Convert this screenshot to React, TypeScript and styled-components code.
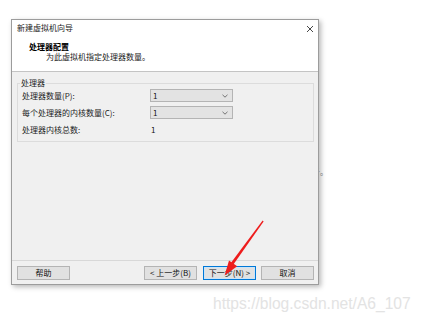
import React from "react";
import styled, { createGlobalStyle } from "styled-components";

const Global = createGlobalStyle`
  html, body { margin: 0; padding: 0; background: #ffffff; }
  body { font-family: "Noto Sans CJK SC", "Noto Sans", sans-serif; }
  * { box-sizing: border-box; }
`;

const Page = styled.div`
  position: relative;
  width: 423px;
  height: 324px;
  overflow: hidden;
  background: #ffffff;
  padding: 19px 0 0 11px;
`;

const Fragment = styled.span`
  position: absolute;
  left: 312px;
  top: 167px;
  font-size: 8px;
  line-height: 10px;
  color: #8a8a8a;
`;

const Dialog = styled.div`
  position: relative;
  z-index: 1;
  width: 308px;
  height: 266px;
  border: 1px solid #9c9c9c;
  background: #f0f0f0;
  box-shadow: 2px 2px 5px rgba(0, 0, 0, 0.28);
  display: flex;
  flex-direction: column;
  font-size: 8px;
  color: #1a1a1a;
`;

const Header = styled.div`
  background: #ffffff;
  border-bottom: 1px solid #c4c4c4;
  padding-bottom: 9px;
`;

const TitleBar = styled.div`
  height: 16px;
  display: flex;
  align-items: center;
  justify-content: space-between;
  padding: 0 4px 0 5px;
  line-height: 10px;
  color: #222;
`;

const Close = styled.svg`
  width: 8px;
  height: 8px;
  margin-top: 1px;
`;

const HeadTitle = styled.div`
  margin-top: 6px;
  padding-left: 17px;
  font-weight: 700;
  line-height: 10px;
  color: #000;
`;

const HeadSub = styled.div`
  padding-left: 34px;
  line-height: 10px;
  color: #222;
`;

const Body = styled.div`
  flex: 1;
  padding: 6px 4px 0 5px;
`;

const Group = styled.fieldset`
  margin: 0;
  padding: 0 4px 5px 4px;
  border: 1px solid #dcdcdc;
  min-width: 0;
`;

const Legend = styled.legend`
  padding: 0 1px;
  margin-left: -2px;
  line-height: 10px;
  color: #222;
`;

const Grid = styled.div`
  display: grid;
  grid-template-columns: 128px 83px;
  grid-auto-rows: 13px;
  row-gap: 4px;
  margin-top: 1px;
  align-items: center;
`;

const Label = styled.div`
  line-height: 10px;
  color: #222;
`;

const Select = styled.div`
  height: 13px;
  border: 1px solid #b4b4b4;
  background: #e3e3e3;
  display: flex;
  align-items: center;
  justify-content: space-between;
  padding: 0 4px 0 2px;
  line-height: 10px;
  color: #111;
`;

const Value = styled.div`
  line-height: 10px;
  padding-left: 1px;
  color: #111;
`;

const Footer = styled.div`
  border-top: 1px solid #d8d8d8;
  padding: 5px 4px 0 5px;
  height: 24px;
  display: flex;
  align-items: flex-start;
`;

const Button = styled.div<{ $primary?: boolean; $gap?: number }>`
  width: 53px;
  height: 14px;
  margin-left: ${(p) => p.$gap ?? 0}px;
  border: 1px solid ${(p) => (p.$primary ? "#0078d7" : "#b4b4b4")};
  box-shadow: ${(p) => (p.$primary ? "inset 0 0 0 1px #cce4f7" : "none")};
  background: #e1e1e1;
  display: flex;
  align-items: center;
  justify-content: center;
  line-height: 10px;
  color: #111;
`;

const Spacer = styled.div`
  flex: 1;
`;

const Arrow = styled.svg`
  position: absolute;
  left: 0;
  top: 0;
  z-index: 2;
  pointer-events: none;
`;

const Watermark = styled.div`
  position: absolute;
  left: 213px;
  top: 296px;
  z-index: 2;
  font-family: "Liberation Sans", Arial, sans-serif;
  font-size: 15.6px;
  line-height: 16px;
  color: #e3e3e3;
  white-space: nowrap;
`;

const Chevron = () => (
  <svg width="6" height="4" viewBox="0 0 6 4">
    <path d="M0.5 0.8 L3 3.2 L5.5 0.8" fill="none" stroke="#666" strokeWidth="0.9" />
  </svg>
);

export default function App() {
  return (
    <>
      <Global />
      <Page>
        <Fragment>千。</Fragment>
        <Dialog>
          <Header>
            <TitleBar>
              <span>新建虚拟机向导</span>
              <Close viewBox="0 0 8 8">
                <path d="M1 1 L7 7 M7 1 L1 7" stroke="#333" strokeWidth="0.9" fill="none" />
              </Close>
            </TitleBar>
            <HeadTitle>处理器配置</HeadTitle>
            <HeadSub>为此虚拟机指定处理器数量。</HeadSub>
          </Header>
          <Body>
            <Group>
              <Legend>处理器</Legend>
              <Grid>
                <Label>处理器数量(P):</Label>
                <Select>
                  <span>1</span>
                  <Chevron />
                </Select>
                <Label>每个处理器的内核数量(C):</Label>
                <Select>
                  <span>1</span>
                  <Chevron />
                </Select>
                <Label>处理器内核总数:</Label>
                <Value>1</Value>
              </Grid>
            </Group>
          </Body>
          <Footer>
            <Button>帮助</Button>
            <Spacer />
            <Button>&lt; 上一步(B)</Button>
            <Button $primary $gap={6}>下一步(N) &gt;</Button>
            <Button $gap={5}>取消</Button>
          </Footer>
        </Dialog>
        <Arrow width="423" height="324" viewBox="0 0 423 324">
          <polygon points="263.6,221.4 262.6,220.6 231.0,262.8 233.4,264.6" fill="#ee1c1c" />
          <polygon points="224.6,275.4 229.0,260.4 237.2,266.2" fill="#ee1c1c" />
        </Arrow>
        <Watermark>https://blog.csdn.net/A6_107</Watermark>
      </Page>
    </>
  );
}
